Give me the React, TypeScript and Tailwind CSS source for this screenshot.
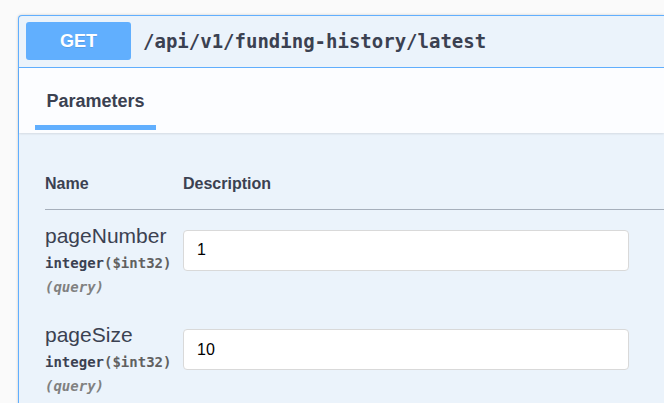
type Parameter = {
  name: string;
  type: string;
  format: string;
  location: string;
  value: string;
};

const parameters: Parameter[] = [
  { name: "pageNumber", type: "integer", format: "($int32)", location: "(query)", value: "1" },
  { name: "pageSize", type: "integer", format: "($int32)", location: "(query)", value: "10" },
];

function ParameterRow({ parameter }: { parameter: Parameter }) {
  return (
    <tr className="align-top">
      <td className="h-[100px] pt-3">
        <label htmlFor={parameter.name} className="block text-[21px] leading-7">
          {parameter.name}
        </label>
        <div className="font-['DejaVu_Sans_Mono',monospace] text-sm leading-6 font-bold">
          <div className="pt-px">
            {parameter.type}
            <span className="text-[#606060]">{parameter.format}</span>
          </div>
          <div className="text-[#808080] italic">{parameter.location}</div>
        </div>
      </td>
      <td className="pt-5 pr-[35px]">
        <input
          id={parameter.name}
          type="text"
          defaultValue={parameter.value}
          className="block h-[41px] w-full rounded border border-[#d9d9d9] bg-white px-[13px] text-base text-black"
        />
      </td>
    </tr>
  );
}

export default function App() {
  return (
    <div className="flex min-h-screen flex-col bg-[#fafafa] pt-[15px] pl-[18px] font-['Liberation_Sans',Arial,sans-serif] text-[#3b4151]">
      <section className="flex flex-1 flex-col rounded-tl border-t border-l border-[#61affe] bg-[#ebf3fb] shadow-[0_0_3px_rgba(0,0,0,0.19)]">
        <header className="flex items-center gap-3 border-b border-[#61affe] px-[7px] pt-1.5 pb-[7px]">
          <button
            type="button"
            className="h-[38px] w-[105px] rounded-[3px] bg-[#61affe] text-lg font-bold text-white [text-shadow:0_1px_0_rgba(0,0,0,0.1)]"
          >
            GET
          </button>
          <h1 className="font-['DejaVu_Sans_Mono',monospace] text-[19px] font-bold">
            /api/v1/funding-history/latest
          </h1>
        </header>
        <div className="flex bg-[#fcfdff] px-4 pb-[3px] shadow-[0_1px_2px_rgba(0,0,0,0.1)]">
          <button
            type="button"
            className="h-[62px] w-[121px] border-b-5 border-[#61affe] pt-2 text-lg font-bold"
          >
            Parameters
          </button>
        </div>
        <div className="pt-7 pl-[26px]">
          <table className="w-full table-fixed border-collapse">
            <thead>
              <tr className="border-b border-[#a6afbb] text-left text-base">
                <th className="h-12 w-[138px] pb-0.5 font-bold">Name</th>
                <th className="pb-0.5 font-bold">Description</th>
              </tr>
            </thead>
            <tbody>
              {parameters.map((parameter) => (
                <ParameterRow key={parameter.name} parameter={parameter} />
              ))}
            </tbody>
          </table>
        </div>
      </section>
    </div>
  );
}
